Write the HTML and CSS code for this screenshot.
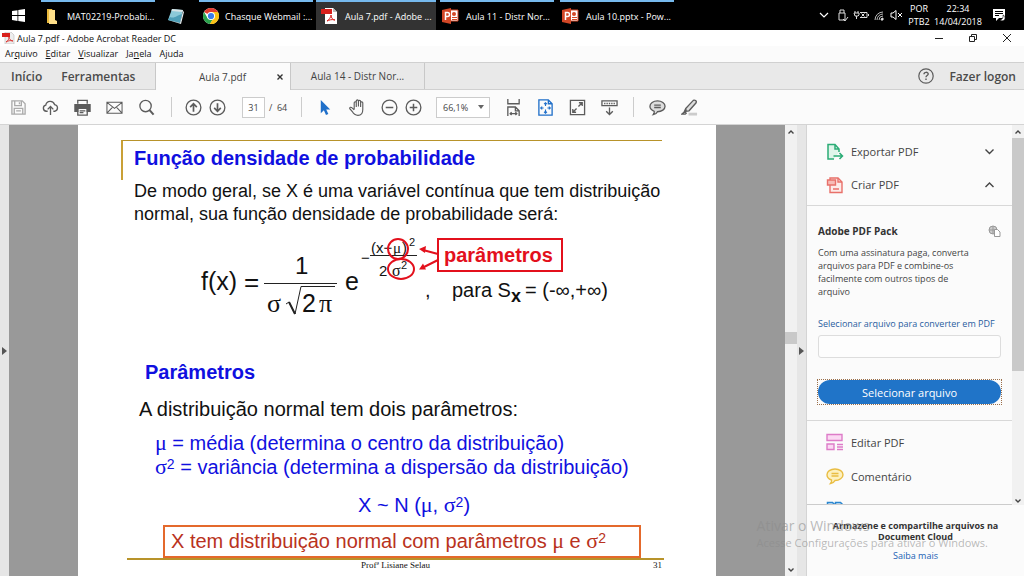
FILE: index.html
```html
<!DOCTYPE html>
<html lang="pt-BR">
<head>
<meta charset="utf-8">
<title>Aula 7.pdf - Adobe Acrobat Reader DC</title>
<link rel="stylesheet" href="styles.css">
</head>
<body>
<div class="desktop">
  <nav class="taskbar" aria-label="Barra de tarefas">
    <button class="start" aria-label="Iniciar"><svg width="13" height="13" viewBox="0 0 13 13" fill="#fff"><path d="M0 2l5.500-.8V6H0zM6.300 1L13 0v6H6.300zM0 7h5.500v4.900L0 11zM6.300 7H13v6l-6.700-1z"/></svg></button>
    <button class="task"><svg width="20" height="18" viewBox="0 0 20 18"><path d="M6 2h5l1 2v12H6z" fill="#e9b93c"/><path d="M8 3h6v10l2 1v3H8z" fill="#ffe08a"/></svg><span>MAT02219-Probabi...</span></button>
    <button class="task task-icon" aria-label="Bloco de notas"><svg width="18" height="18" viewBox="0 0 18 18"><path d="M5 2l11 1-3 13-12-3z" fill="#8cc9d8"/><path d="M5 2l11 1-.5 2L4.500 4z" fill="#d9e4e6"/><path d="M3 10c5 2 7-2 12-3l-2 9-12-3z" fill="#4f9fb8"/><path d="M1 13l12 3 3-12 1 1-3 12z" fill="#e8eef0"/></svg></button>
    <button class="task"><svg width="20" height="18" viewBox="0 0 20 18"><circle cx="12" cy="9" r="8" fill="#fff"/><path d="M12 9L5.100 5A8 8 0 0 1 18.900 5H12z" fill="#e33b2e"/><path d="M5.100 5A8 8 0 0 0 11 17l4-6.500-6.500.5z" fill="#2ba24c"/><path d="M18.900 5A8 8 0 0 1 11 17l4.500-8L12 5z" fill="#fbc116"/><circle cx="12" cy="9" r="4" fill="#fff"/><circle cx="12" cy="9" r="3.100" fill="#3b7ded"/></svg><span>Chasque Webmail :...</span></button>
    <button class="task task-active"><svg width="20" height="18" viewBox="0 0 20 18"><path d="M6 1h8l4 4v12H6z" fill="#fff"/><path d="M14 1v4h4z" fill="#bbb"/><path d="M2 2h11v5H2z" fill="#d8201c"/><path d="M8 14c2-1 4-4 4-6 0 3 2 5 4 5-3-1-6 0-8 1z" fill="none" stroke="#d8201c"/></svg><span>Aula 7.pdf - Adobe ...</span></button>
    <button class="task"><svg width="20" height="18" viewBox="0 0 20 18"><path d="M10 3h8v11h-8z" fill="#fff" stroke="#d24726"/><circle cx="14" cy="7" r="2" fill="#d24726"/><path d="M12 10.500h5M12 12.500h5" stroke="#d24726"/><path d="M2 3l9-2v16l-9-2z" fill="#d24726"/><path d="M5.500 13V5.500h2a2 2 0 0 1 0 4h-2" fill="none" stroke="#fff" stroke-width="1.500"/></svg><span>Aula 11 - Distr Nor...</span></button>
    <button class="task"><svg width="20" height="18" viewBox="0 0 20 18"><path d="M10 3h8v11h-8z" fill="#fff" stroke="#d24726"/><circle cx="14" cy="7" r="2" fill="#d24726"/><path d="M12 10.500h5M12 12.500h5" stroke="#d24726"/><path d="M2 3l9-2v16l-9-2z" fill="#d24726"/><path d="M5.500 13V5.500h2a2 2 0 0 1 0 4h-2" fill="none" stroke="#fff" stroke-width="1.500"/></svg><span>Aula 10.pptx - Pow...</span></button>
    <div class="tray">
      <svg width="86" height="18" viewBox="0 0 86 18" fill="none" stroke="#ddd"><path d="M2 7l4 4 4-4" stroke="#fff" stroke-width="1.200"/><path d="M22 7V4h4v3M21 7h6v7h-6zM25 13l2 2 3-4"/><path d="M37 5v2M40 5v2M36 7h5v2l-1 1h-3zM38.500 10v3M42 6.500h7v5h-7M43.500 7.500l3 3M46.500 7.500l-3 3M50.500 8v2"/><path d="M57 14a8 8 0 0 1 8-8M59 14a6 6 0 0 1 6-6M61 14a4 4 0 0 1 4-4" stroke="#bbb"/><path d="M63 14a2 2 0 0 1 2-2v2z" fill="#fff"/><path d="M73 7h2l3-2.500v9L75 11h-2zM80 7l4 4M84 7l-4 4" stroke="#fff"/></svg>
      <div class="tray-text"><span>POR</span><span>PTB2</span></div>
      <div class="tray-text tray-clock"><span>22:34</span><span>14/04/2018</span></div>
      <svg width="14" height="14" viewBox="0 0 14 14"><path d="M1 1h12v9H7l-3 3v-3H1z" fill="#fff"/><path d="M3 3.500h8M3 5.500h8M3 7.500h4" stroke="#000"/><path d="M8 12a4 4 0 0 0 3-5 3 3 0 1 1-3 5z" fill="#fff" stroke="#000" stroke-width=".6"/></svg>
    </div>
  </nav>

  <header class="titlebar">
    <svg width="13" height="12" viewBox="0 0 13 12"><path d="M3 0h6l3 3v9H3z" fill="#eee" stroke="#bbb" stroke-width=".6"/><path d="M0 1h8v4H0z" fill="#d8201c"/><path d="M4 10c2-1 3-3 3-5 0 2 2 4 4 4-3-1-5 0-7 1z" fill="none" stroke="#d8201c" stroke-width=".8"/></svg>
    <span class="title">Aula 7.pdf - Adobe Acrobat Reader DC</span>
    <button class="win" aria-label="Minimizar"><svg width="8" height="8" viewBox="0 0 8 8" stroke="#222"><path d="M0 4.500h8"/></svg></button>
    <button class="win" aria-label="Restaurar"><svg width="8" height="8" viewBox="0 0 8 8" stroke="#222" fill="none"><path d="M.5 2.500h5v5h-5zM2.500 2.500v-2h5v5h-2"/></svg></button>
    <button class="win" aria-label="Fechar"><svg width="8" height="8" viewBox="0 0 8 8" stroke="#222"><path d="M0 0l8 8M8 0L0 8"/></svg></button>
  </header>
  <nav class="menu">
    <button>Ar<u>q</u>uivo</button><button><u>E</u>ditar</button><button><u>V</u>isualizar</button><button>Ja<u>n</u>ela</button><button>Ajuda</button>
  </nav>

  <nav class="tabs">
    <div class="tabs-home"><button>Início</button><button>Ferramentas</button></div>
    <button class="tab tab-current"><span>Aula 7.pdf</span><svg width="6" height="6" viewBox="0 0 6 6" stroke="#333" stroke-width="1.400"><path d="M.5.5l5 5M5.500.5l-5 5"/></svg></button>
    <button class="tab"><span>Aula 14 - Distr Nor...</span></button>
    <div class="account"><button aria-label="Ajuda"><svg width="16" height="16" viewBox="0 0 16 16" fill="none" stroke="#5c5c5c" stroke-width="1.200"><circle cx="8" cy="8" r="7.200"/><path d="M6 6.300c0-2.600 4.200-2.600 4.200-.2C10.200 7.600 8 7.500 8 9.300M8 10.500V12" stroke-width="1.400"/></svg></button><button>Fazer logon</button></div>
  </nav>

  <div class="toolbar">
    <button class="tool dim" aria-label="Salvar"><svg viewBox="0 0 18 18"><path d="M2 2h11l3 3v11H2zM5 2v5h7V2M4.500 16v-6h9v6M6.500 12.500h5M10 3.500v2"/></svg></button>
    <button class="tool" aria-label="Enviar"><svg viewBox="0 0 18 18"><path d="M6 13H4.500A3.300 3.300 0 0 1 4 6.500a4.800 4.800 0 0 1 9.300-.6A3.600 3.600 0 0 1 13.500 13H12M9 17V8M6 11l3-3 3 3"/></svg></button>
    <button class="tool" aria-label="Imprimir"><svg viewBox="0 0 18 18"><path d="M4 5V1.500h10V5"/><path d="M1 6h16v7h-3v-3H4v3H1z" fill="#5c5c5c"/><path d="M4 10h10v7H4zM6 12.500h6M6 14.500h4"/></svg></button>
    <button class="tool" aria-label="E-mail"><svg viewBox="0 0 18 18"><path d="M1 3.500h16v11.500H1zM1 3.500l8 6.500 8-6.500M1 15l6-6.500M17 15l-6-6.500" stroke-width="1.100"/></svg></button>
    <button class="tool" aria-label="Localizar"><svg viewBox="0 0 18 18"><circle cx="8" cy="7.500" r="6"/><path d="M12 11.500l4.500 5" stroke-width="2.200"/></svg></button>
    <span class="sep sep-wide"></span>
    <button class="tool narrow" aria-label="Página anterior"><svg viewBox="0 0 18 18"><circle cx="9" cy="9" r="7.800"/><path d="M9 13.500V5M5.500 8.500L9 5l3.500 3.500" stroke-width="1.800"/></svg></button>
    <button class="tool narrow" aria-label="Próxima página"><svg viewBox="0 0 18 18"><circle cx="9" cy="9" r="7.800"/><path d="M9 4.500V13M5.500 9.500L9 13l3.500-3.500" stroke-width="1.800"/></svg></button>
    <input class="page-no" id="page-no" value="31"><label class="page-total" for="page-no">/&nbsp; 64</label>
    <span class="sep sep-tight"></span>
    <button class="tool" aria-label="Selecionar"><svg viewBox="0 0 18 18"><path d="M4 1l10 10H9.800l2.200 5-2.500 1-2.200-5L4 15z" fill="#1f6fc9" stroke="none"/></svg></button>
    <button class="tool" aria-label="Mão"><svg viewBox="0 0 18 18"><path d="M5.500 11V4c0-1.500 2.200-1.500 2.200 0v4.500M7.700 8V2c0-1.500 2.300-1.500 2.300 0v6M10 8V2.500c0-1.400 2.300-1.400 2.300 0v6M12.300 8.500V4c0-1.400 2.300-1.300 2.300 0v7c0 4-1.600 6.300-5.100 6.300s-5-2-6-4L.8 10.300C.5 8.500 2.200 8.300 3.300 9.500l2.200 2" stroke-width="1.200"/></svg></button>
    <span class="space"></span>
    <button class="tool narrow" aria-label="Reduzir"><svg viewBox="0 0 18 18"><circle cx="9" cy="9" r="7.800"/><path d="M5 9h8" stroke-width="1.600"/></svg></button>
    <button class="tool narrow" aria-label="Ampliar"><svg viewBox="0 0 18 18"><circle cx="9" cy="9" r="7.800"/><path d="M5 9h8M9 5v8" stroke-width="1.600"/></svg></button>
    <div class="zoom"><select aria-label="Zoom"><option>66,1%</option></select><svg width="6" height="4" viewBox="0 0 6 4"><path d="M0 0h6L3 4z" fill="#666"/></svg></div>
    <button class="tool" aria-label="Ajustar largura"><svg viewBox="0 0 18 18"><path d="M3 0v5h12V0M3 18V8.500h8l4 4V18M11 8.500v4h4M5.500 15.500h7M7 14l-1.500 1.500L7 17M11 14l1.500 1.500L11 17"/></svg></button>
    <button class="tool blue" aria-label="Ajustar página"><svg viewBox="0 0 18 18"><path d="M2 1h10l4 4v12H2zM12 1v4h4"/><path d="M9 4.500v3M9 11v3.500M4 9.500h3M11 9.500h3" stroke-width="1.200"/><path d="M7.500 5.500L9 4l1.500 1.500M7.500 13.500L9 15l1.500-1.500M5.500 8L4 9.500 5.500 11M12.500 8L14 9.500 12.500 11" stroke-width="1.200"/></svg></button>
    <button class="tool" aria-label="Tela cheia"><svg viewBox="0 0 18 18"><path d="M1.500 1.500h15v15h-15zM10 8l4-4M10.500 4H14v3.500M8 10l-4 4M4 10.500V14h3.500"/></svg></button>
    <button class="tool" aria-label="Modo de leitura"><svg viewBox="0 0 18 18"><path d="M1 2h16v5H1zM4 4v1.500M6.500 4v1.500M9 4v1.500M11.500 4v1.500M14 4v1.500M9 9v7.500M5.500 13L9 16.500l3.500-3.500"/></svg></button>
    <span class="sep"></span>
    <button class="tool" aria-label="Comentar"><svg viewBox="0 0 18 18"><path d="M9 2c4.500 0 8 2.500 8 5.700s-3.500 5.800-8 5.800c-.7 1.500-2.500 2.700-4.500 3 1-1.200 1.300-2.400 1-3.500C2.800 12 1 10.200 1 7.700 1 4.500 4.500 2 9 2z" fill="#ddd"/><path d="M5.500 6.500h7M5.500 9h7"/></svg></button>
    <button class="tool" aria-label="Realçar"><svg viewBox="0 0 18 18"><path d="M8 16h9" stroke="#ccc" stroke-width="3"/><path d="M5 10l8-8.500c1.500-1 4 .5 3 2.500l-7.500 8.500-3 .5zM5 10l-2 4.500 2.500-1.500M1 16l3-2.500 1.500 1.500-1 1z" fill="#ddd"/></svg></button>
  </div>

  <main class="main">
    <button class="splitter" aria-label="Abrir painel esquerdo"><svg width="5" height="8" viewBox="0 0 5 8"><path d="M0 0l5 4-5 4z" fill="#555"/></svg></button>
    <section class="canvas">
      <article class="page">
        <h1 class="slide-title">Função densidade de probabilidade</h1>
        <p class="intro">De modo geral, se X é uma variável contínua que tem distribuição normal, sua função densidade de probabilidade será:</p>
        <svg class="formula" width="450" height="94" viewBox="190 226 450 94" role="img" aria-label="Função densidade da distribuição normal">
          <g fill="#111" stroke="none">
            <text x="201" y="290" font-size="25">f(x)</text><text x="244" y="291" font-size="26">=</text>
            <text x="295" y="274" font-size="24">1</text>
            <text x="267" y="312" font-size="26" class="greek">σ</text><text x="302" y="312" font-size="25">2</text><text x="319" y="312" font-size="26" class="greek">π</text>
            <text x="345" y="290" font-size="25">e</text>
            <text x="361" y="263" font-size="15">−</text><text x="371" y="253" font-size="15">(x−</text><text x="393" y="253" font-size="15" class="greek">μ</text><text x="402" y="253" font-size="15">)</text><text x="409" y="246" font-size="11">2</text>
            <text x="379" y="276" font-size="15">2</text><text x="392" y="276" font-size="16" class="greek">σ</text><text x="401" y="269" font-size="11">2</text>
            <text x="425" y="297" font-size="20">,</text>
            <text x="452" y="297" font-size="20">para S</text><text x="511" y="302" font-size="18" class="strong">x</text><text x="525" y="297" font-size="20">= (-∞,+∞)</text>
          </g>
          <g fill="none" stroke="#222"><path d="M264 283.500h73M370 255.500h47M286 304l3-2 6 12 6-27.500h34"/></g>
          <path d="M289 302l6 12" stroke="#222" stroke-width="2"/>
          <g fill="none" stroke="#e3101c" stroke-width="2"><ellipse cx="398" cy="249" rx="10" ry="10"/><ellipse cx="401" cy="269" rx="13" ry="10"/><path d="M438 254l-15-4M438 260l-14 7"/><rect x="438" y="239" width="124" height="32"/></g>
          <path d="M419 249l7-3-1 7zM419 269.500l4-6 3 6z" fill="#e3101c"/>
          <text x="444" y="262" font-size="20" class="strong" fill="#e3101c">parâmetros</text>
        </svg>
        <h2 class="sub">Parâmetros</h2>
        <p class="lead">A distribuição normal tem dois parâmetros:</p>
        <p class="defs"><i>μ</i> = média (determina o centro da distribuição)<br><i>σ</i><sup>2</sup> = variância (determina a dispersão da distribuição)</p>
        <p class="notation">X ~ N (<i>μ</i>, <i>σ</i><sup>2</sup>)</p>
        <p class="boxed">X tem distribuição normal com parâmetros <i>μ</i> e <i>σ</i><sup>2</sup></p>
        <footer class="slide-foot"><span>Profª Lisiane Selau</span><span class="slide-no">31</span></footer>
      </article>
    </section>
    <div class="scroll">
      <svg width="6" height="4" viewBox="0 0 6 4" class="chev"><path d="M.5 3.500L3 1l2.500 2.500"/></svg>
      <span class="thumb-page"></span>
      <svg width="6" height="4" viewBox="0 0 6 4" class="chev"><path d="M.5.5L3 3 5.500.5"/></svg>
    </div>
    <button class="splitter" aria-label="Fechar painel direito"><svg width="5" height="8" viewBox="0 0 5 8"><path d="M0 0l5 4-5 4z" fill="#555"/></svg></button>

    <aside class="side">
      <div class="side-top">
        <div class="side-body">
          <div class="group">
            <button class="row"><svg width="18" height="18" viewBox="0 0 18 18" fill="none" stroke="#2bac76" stroke-width="1.500"><path d="M8 16H2V1.500h7L13 6v3M9 1.500V6h4" fill="#dff5ea"/><path d="M7.500 13H16M13.500 10l3 3-3 3"/></svg><span>Exportar PDF</span><svg width="9" height="6" viewBox="0 0 9 6" class="chev wide"><path d="M.5.5l4 4 4-4"/></svg></button>
            <button class="row"><svg width="18" height="18" viewBox="0 0 18 18" fill="none" stroke="#e8706a" stroke-width="1.400"><path d="M4 2h8l4 4v10.500H4z" fill="#fdebe9"/><path d="M12 2v4h4M7 13h6"/><path d="M1.500 4h8v5h-8z" fill="#f6bcb7"/></svg><span>Criar PDF</span><svg width="9" height="6" viewBox="0 0 9 6" class="chev wide"><path d="M.5 5l4-4 4 4"/></svg></button>
          </div>
          <div class="pack">
            <h3>Adobe PDF Pack<svg width="13" height="12" viewBox="0 0 13 12" fill="none" stroke="#999"><circle cx="5" cy="5" r="4" fill="#ccc"/><path d="M1 5h8M5 1v8"/><path d="M6.500 4.500h3l2.500 2.500v4.500H6.500z" fill="#fff"/></svg></h3>
            <p>Com uma assinatura paga, converta arquivos para PDF e combine-os facilmente com outros tipos de arquivo</p>
            <label for="file">Selecionar arquivo para converter em PDF</label>
            <input id="file" class="file">
            <div class="focus"><button class="primary">Selecionar arquivo</button></div>
          </div>
          <div class="group group-more">
            <button class="row"><svg width="18" height="18" viewBox="0 0 18 18" fill="#fbd9f3" stroke="#dd7cc8" stroke-width="1.400"><path d="M1 1.500h15v6H1zM1 11h7v5.500H1z"/><path d="M11 11.500h6M11 14h6M11 16.500h6"/></svg><span>Editar PDF</span></button>
            <button class="row"><svg width="18" height="18" viewBox="0 0 18 18" fill="#fdf1c0" stroke="#e9bd43" stroke-width="1.400"><path d="M9 2c4.500 0 8 2.500 8 5.700s-3.500 5.800-8 5.800c-.7 1.500-2.500 2.700-4.500 3 1-1.200 1.300-2.400 1-3.500C2.800 12 1 10.200 1 7.700 1 4.500 4.500 2 9 2z"/><path d="M5.500 6.500h7M5.500 9h7"/></svg><span>Comentário</span></button>
            <button class="row" aria-label="Combinar arquivos"><svg width="18" height="18" viewBox="0 0 18 18" fill="#cfe6f8" stroke="#2a86cf" stroke-width="1.500"><path d="M1.500 1.500h5l2 2V14h-7zM9.500 1.500h5l2 2V14h-7z"/></svg></button>
          </div>
        </div>
        <div class="scroll scroll-side">
          <svg width="6" height="4" viewBox="0 0 6 4" class="chev"><path d="M.5 3.500L3 1l2.500 2.500"/></svg>
          <span class="thumb-side"></span>
          <svg width="6" height="4" viewBox="0 0 6 4" class="chev"><path d="M.5.5L3 3 5.500.5"/></svg>
        </div>
      </div>
      <div class="cloud"><strong>Armazene e compartilhe arquivos na Document Cloud</strong><a href="#">Saiba mais</a></div>
    </aside>
  </main>
  <div class="watermark"><div class="wm-title">Ativar o Windows</div><div>Acesse Configurações para ativar o Windows.</div></div>
</div>
</body>
</html>
```

FILE: styles.css
```css
* { box-sizing: border-box; }
body { margin: 0; font-family: "Open Sans", "Noto Sans", sans-serif; font-size: 9px; color: #444; }
button { font: inherit; color: inherit; background: none; border: 0; padding: 0; white-space: nowrap; }
h1, h2, h3, p { margin: 0; }
svg { display: block; flex: none; }
.desktop { position: relative; display: flex; flex-direction: column; height: 100vh; min-height: 576px; overflow: hidden; background: #fbfbfb; }

.taskbar { display: flex; flex: none; height: 30px; background: #000; color: #fff; }
.start { display: flex; align-items: center; width: 41px; padding-left: 12px; }
.task { display: flex; align-items: center; gap: 6px; width: 114px; margin-right: 6px; border-top: 2px solid #76b9ed; }
.task-icon { width: 32px; padding-left: 6px; border-color: #000; }
.task-active { width: 120px; margin-right: 4px; padding-left: 3px; margin-left: -3px; background: #333; }
.tray { display: flex; align-items: center; margin-left: auto; padding-right: 18px; }
.tray-text { display: flex; flex-direction: column; width: 30px; line-height: 13px; text-align: center; }
.tray-clock { width: 48px; margin-right: 10px; }

.titlebar { display: flex; flex: none; align-items: center; height: 16px; padding-left: 2px; background: #fff; color: #111; }
.title { flex: 1; padding-left: 2px; }
.win { display: flex; justify-content: center; width: 34px; height: 16px; padding-top: 4px; }
.menu { display: flex; flex: none; gap: 8px; height: 16px; padding-left: 5px; line-height: 16px; color: #111; }

.tabs { display: flex; flex: none; height: 28px; background: #e9e9e9; border-top: 1px solid #d0d0d0; border-bottom: 1px solid #d0d0d0; font-size: 10px; }
.tabs-home { display: flex; gap: 19px; width: 155px; padding-left: 11px; font-weight: 600; font-size: 12px; color: #4b4b4b; }
.tab { display: flex; align-items: center; width: 134px; border-right: 1px solid #c8c8c8; }
.tab span { flex: 1; }
.tab-current { width: 136px; height: 28px; padding: 0 7px 0 12px; background: #fbfbfb; border-left: 1px solid #c8c8c8; }
.account { display: flex; align-items: center; gap: 15px; margin-left: auto; padding-right: 8px; font-size: 12px; font-weight: 600; color: #4b4b4b; }

.toolbar { display: flex; flex: none; align-items: center; height: 35px; padding-left: 2px; border-bottom: 1px solid #d4d4d4; background: #fbfbfb; }
.tool { display: flex; justify-content: center; width: 32px; }
.tool svg { width: 17px; height: 17px; fill: none; stroke: #5c5c5c; stroke-width: 1.4; }
.tool.narrow { width: 24px; }
.tool.dim svg { stroke: #aaa; }
.tool.blue svg { stroke: #1f6fc9; }
.sep { width: 1px; height: 20px; margin: 0 7px 0 8px; background: #ccc; }
.sep-wide { margin: 0 9px; }
.sep-tight { margin-left: 0; }
.space { width: 4px; }
.page-no { width: 23px; height: 21px; margin-left: 13px; padding: 0; border: 1px solid #ccc; background: #fff; font: inherit; color: #444; text-align: center; }
.page-total { width: 32px; margin-left: 4px; white-space: nowrap; }
.zoom { display: flex; align-items: center; width: 54px; height: 21px; margin: 0 7px 0 11px; padding-right: 5px; border: 1px solid #ccc; background: #fff; }
.zoom select { flex: 1; min-width: 0; padding: 0 0 0 6px; border: 0; background: none; appearance: none; font: inherit; color: #444; }

.main { display: flex; flex: 1; min-height: 0; }
.splitter { display: flex; flex: none; align-items: center; justify-content: center; width: 9px; background: #e6e6e6; }
.canvas { flex: 1; min-width: 0; padding: 0 69px; background: #999; overflow: hidden; }
.page { display: flex; flex-direction: column; min-height: 100%; padding: 15px 0 0; background: #fff; color: #111; font-family: "Liberation Sans", Arial, sans-serif; font-size: 20px; line-height: 24px; }
.page i, .greek { font-family: "Liberation Serif", "Times New Roman", serif; font-style: normal; }
.page i { font-size: 22px; line-height: 0; }
.page sup { font-size: 14px; line-height: 0; vertical-align: 5px; }
.strong { font-weight: 700; }
.slide-title { height: 40px; margin: 0 54px 0 43px; padding: 5px 0 0 11px; border-top: 1px solid #b8932a; border-left: 2px solid #c9a036; font-size: 20px; line-height: 24px; color: #1010e0; white-space: nowrap; }
.intro { margin: 0 40px 0 56px; font-size: 18px; line-height: 23px; }
.formula { margin: 0 0 40px 112px; font-family: "Liberation Sans", Arial, sans-serif; }
.sub { padding-left: 67px; font-size: 20px; color: #1010e0; }
.lead { padding: 13px 0 10px 61px; }
.defs { padding-left: 77px; color: #1010e0; }
.notation { padding: 14px 0 8px 280px; color: #1010e0; }
.boxed { margin: 0 75px 0 85px; padding: 2px 6px 3px; border: 2px solid #e4692c; color: #b93220; white-space: nowrap; }
.slide-foot { display: flex; justify-content: space-between; margin: 0 52px 0 49px; padding: 0 2px 0 234px; border-top: 2px solid #b8932a; font-family: "Liberation Serif", serif; font-size: 9px; line-height: 10px; }

.scroll { display: flex; flex: none; flex-direction: column; align-items: center; justify-content: space-between; width: 12px; padding: 5px 0 4px; background: #f1f1f1; }
.chev { fill: none; stroke: #444; stroke-width: 1.4; }
.thumb-page { width: 12px; height: 12px; margin-top: auto; margin-bottom: 224px; background: #c9c9c9; }
.side { display: flex; flex: none; flex-direction: column; width: 218px; border-left: 1px solid #d4d4d4; background: #fbfbfb; }
.side-top { display: flex; flex: 1; min-height: 0; }
.side-body { flex: 1; min-width: 0; overflow: hidden; border-bottom: 1px solid #ccc; }
.scroll-side { padding-bottom: 2px; }
.thumb-side { flex: 1; width: 12px; margin: 4px 0 128px; background: #c9c9c9; }
.group { padding: 10px 18px 4px 19px; border-bottom: 1px solid #d8d8d8; }
.group-more { padding-top: 4px; border: 0; }
.row { display: flex; align-items: center; gap: 7px; width: 100%; height: 33px; font-size: 11px; text-align: left; }
.row span { flex: 1; }
.group-more .row { height: 34px; }
.pack { padding: 17px 11px 15px; border-bottom: 1px solid #d8d8d8; line-height: 13px; }
.pack h3 { display: flex; justify-content: space-between; align-items: center; margin-bottom: 7px; font-size: 10px; line-height: 16px; color: #333; }
.pack p { padding-right: 23px; }
.pack label { display: block; margin: 19px 0 5px; color: #2a5d9f; white-space: nowrap; }
.file { display: block; width: 100%; height: 23px; border: 1px solid #ddd; border-radius: 3px; background: #fdfdfd; }
.focus { margin: 21px -1px 0; border: 1px dotted #9b6f4a; }
.primary { display: block; width: 100%; height: 24px; border-radius: 12px; background: #2074c8; color: #fff; font-size: 11px; }
.cloud { flex: none; height: 71px; padding: 15px 14px 0; line-height: 11px; text-align: center; color: #333; }
.cloud strong { display: block; margin-bottom: 8px; }
.cloud a { color: #1a5fb4; text-decoration: none; }
.watermark { position: absolute; right: 36px; bottom: 26px; color: rgba(140, 140, 140, .6); font-size: 11px; line-height: 14px; white-space: nowrap; pointer-events: none; }
.wm-title { font-size: 14px; line-height: 20px; }
```
